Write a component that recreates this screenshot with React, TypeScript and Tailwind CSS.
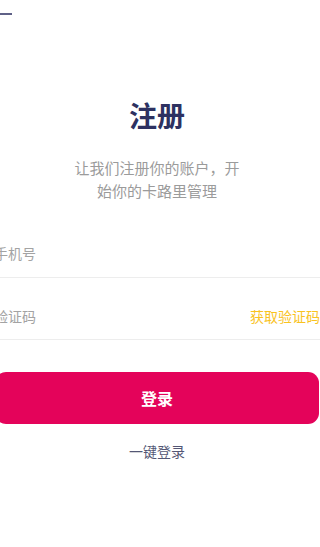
import React from "react";

const font = { fontFamily: '"Noto Sans CJK SC", "Noto Sans", sans-serif' };

export default function App() {
  return (
    <div className="w-[320px] h-[547px] overflow-hidden bg-white" style={font}>
      {/* back arrow (mostly off screen) */}
      <div className="pt-[13px]">
        <div className="w-[12px] h-[2px] bg-[#5f6187]" />
      </div>

      <div className="ml-[-6px] w-[326px]">
        <h1 className="mt-[82px] text-center text-[28px] leading-[36px] font-bold text-[#2d3161]">
          注册
        </h1>
        <p className="mt-[23px] text-center text-[15px] leading-[23px] text-[#9b9b9b]">
          让我们注册你的账户，开
          <br />
          始你的卡路里管理
        </p>

        <div className="mt-[14px]">
          <div className="h-[62px] flex items-end pb-[14px] border-b border-[#ededed]">
            <input
              placeholder="手机号"
              className="w-full text-[14px] leading-[20px] outline-none placeholder:text-[#a3a3a3]"
            />
          </div>
          <div className="h-[62px] flex items-end justify-between pb-[13px] border-b border-[#ededed]">
            <input
              placeholder="验证码"
              className="flex-1 min-w-0 text-[14px] leading-[20px] outline-none placeholder:text-[#a3a3a3]"
            />
            <span className="text-[14px] leading-[20px] text-[#f9c31f]">获取验证码</span>
          </div>
        </div>

        <button className="mt-[32px] ml-[1px] w-[324px] h-[52px] rounded-[11px] bg-[#e4035a] text-white text-[16px] font-bold">
          登录
        </button>

        <p className="mt-[17px] text-center text-[14px] leading-[20px] text-[#545775]">一键登录</p>
      </div>
    </div>
  );
}
